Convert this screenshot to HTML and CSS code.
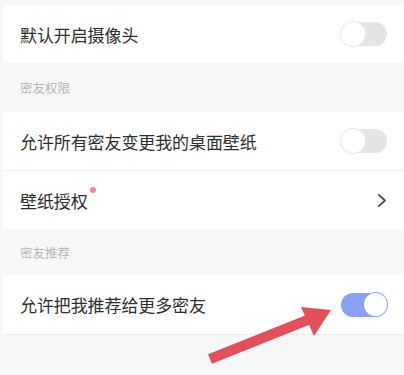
FILE: index.html
```html
<!DOCTYPE html>
<html lang="zh">
<head>
<meta charset="utf-8">
<link rel="stylesheet" href="styles.css">
</head>
<body>
<div class="page">
  <div class="top-gap"></div>
  <div class="row">
    <span class="label">默认开启摄像头</span>
    <span class="toggle"><span class="knob"></span></span>
  </div>
  <div class="section section-a">密友权限</div>
  <div class="row">
    <span class="label">允许所有密友变更我的桌面壁纸</span>
    <span class="toggle"><span class="knob"></span></span>
  </div>
  <div class="divider"></div>
  <div class="row">
    <span class="label dotted">壁纸授权<span class="dot"></span></span>
    <svg class="chevron" width="10" height="15" viewBox="0 0 10 15"><path d="M1.8 1.8 L8 7.5 L1.8 13.2" fill="none" stroke="#4a4a4a" stroke-width="1.8" stroke-linecap="round" stroke-linejoin="round"/></svg>
  </div>
  <div class="section section-b">密友推荐</div>
  <div class="row row-last">
    <span class="label">允许把我推荐给更多密友</span>
    <span class="toggle on"><span class="knob"></span></span>
  </div>
  <div class="bottom"></div>
</div>
<svg class="arrow" width="404" height="375" viewBox="0 0 404 375">
  <line x1="210" y1="359" x2="310" y2="319" stroke="#e0515b" stroke-width="10"/>
  <polygon points="331,310 301,307 314,336" fill="#e0515b"/>
</svg>
</body>
</html>
```
FILE: styles.css
```css
* { box-sizing: border-box; }
html, body {
  margin: 0;
  padding: 0;
  background: #f7f7f7;
  font-family: "Noto Sans CJK SC", "Noto Sans", sans-serif;
}
.page {
  width: 404px;
  height: 375px;
  overflow: hidden;
  display: flex;
  flex-direction: column;
  padding: 0 0 0 3px;
}
.top-gap { height: 5px; flex: none; }
.row {
  flex: none;
  height: 58px;
  background: #fff;
  display: flex;
  align-items: center;
  justify-content: space-between;
  padding: 0 17px 0 17px;
}
.row-last {
  height: 60px;
  border-bottom: 1px solid #ececec;
}
.label {
  font-size: 17px;
  color: #2e2e2e;
  letter-spacing: -0.1px;
}
.dotted { position: relative; }
.dot {
  position: absolute;
  right: -8px;
  top: -1px;
  width: 6px;
  height: 6px;
  border-radius: 50%;
  background: #ee8c98;
}
.section {
  flex: none;
  display: flex;
  align-items: center;
  padding-left: 17px;
  font-size: 12.5px;
  color: #b5b5b5;
}
.section-a { height: 49px; }
.section-b { height: 46px; }
.divider { height: 1px; background: #f1f1f1; flex: none; }
.toggle {
  width: 46px;
  height: 24px;
  border-radius: 12px;
  background: #e4e4e4;
  display: flex;
  align-items: center;
  flex: none;
}
.knob {
  width: 24px;
  height: 24px;
  border-radius: 50%;
  background: #fff;
  box-shadow: 0 0 0 1px #e8e8e8;
}
.toggle.on {
  background: #89a2f6;
  justify-content: flex-end;
}
.toggle.on .knob {
  box-shadow: 0 0 0 1px #8aa2f0;
  width: 23px;
  height: 23px;
  margin-right: 0.5px;
}
.chevron { margin-right: 0; }
.bottom { flex: 1; }
.arrow {
  position: absolute;
  left: 0;
  top: 0;
  pointer-events: none;
}
```
